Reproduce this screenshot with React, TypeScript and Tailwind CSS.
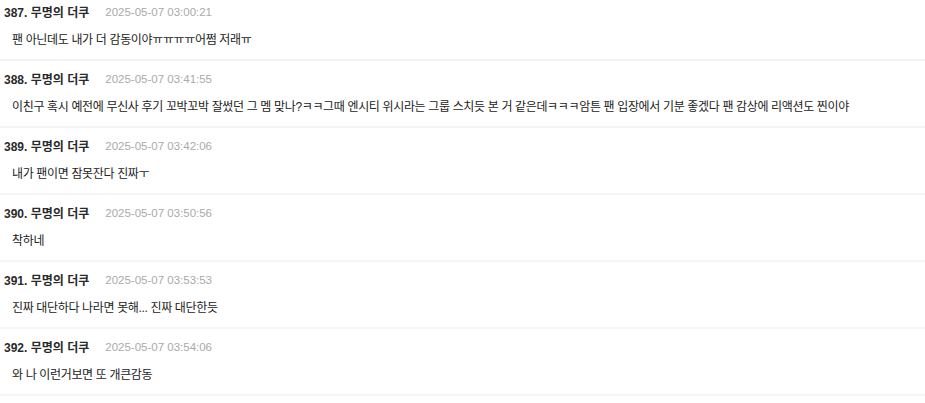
import React from "react";

const items = [
  { n: 387, d: "2025-05-07 03:00:21", t: "팬 아닌데도 내가 더 감동이야ㅠㅠㅠㅠ어쩜 저래ㅠ" },
  { n: 388, d: "2025-05-07 03:41:55", t: "이친구 혹시 예전에 무신사 후기 꼬박꼬박 잘썼던 그 멤 맞나?ㅋㅋ그때 엔시티 위시라는 그룹 스치듯 본 거 같은데ㅋㅋㅋ암튼 팬 입장에서 기분 좋겠다 팬 감상에 리액션도 찐이야" },
  { n: 389, d: "2025-05-07 03:42:06", t: "내가 팬이면 잠못잔다 진짜ㅜ" },
  { n: 390, d: "2025-05-07 03:50:56", t: "착하네" },
  { n: 391, d: "2025-05-07 03:53:53", t: "진짜 대단하다 나라면 못해... 진짜 대단한듯" },
  { n: 392, d: "2025-05-07 03:54:06", t: "와 나 이런거보면 또 개큰감동" },
];

export default function App() {
  return (
    <div
      className="w-[925px] h-[403px] overflow-hidden bg-white"
      style={{ fontFamily: '"Liberation Sans", "Noto Sans CJK KR", sans-serif' }}
    >
      {items.map((it) => (
        <div key={it.n} className="pt-[10px] first:pt-[4px] pb-[11px] border-b-2 border-[#f4f4f4]">
          <div className="h-[17px] flex items-center pl-[4px] gap-[16px]">
            <span className="text-[12px] font-bold text-[#2a2a2a]">{it.n}. 무명의 더쿠</span>
            <span className="text-[11.5px] text-[#aaa]">{it.d}</span>
          </div>
          <div className="mt-[10px] h-[17px] flex items-center pl-[12px] text-[12px] tracking-[-0.35px] text-[#222] whitespace-nowrap">
            {it.t}
          </div>
        </div>
      ))}
    </div>
  );
}
